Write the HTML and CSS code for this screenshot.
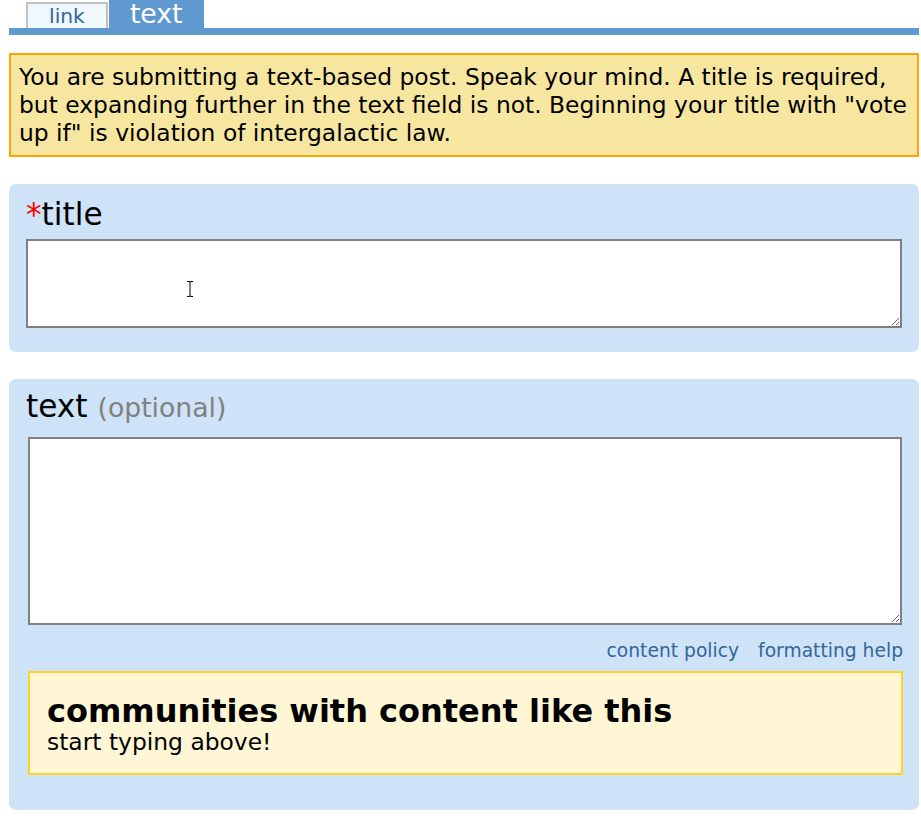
FILE: index.html
```html
<!DOCTYPE html>
<html>
<head>
<meta charset="utf-8">
<title>submit</title>
<link rel="stylesheet" href="styles.css">
</head>
<body>
<div class="page">
  <ul class="tabmenu">
    <li class="tab tab-link">link</li>
    <li class="tab tab-selected">text</li>
  </ul>

  <div class="infobar">You are submitting a text-based post. Speak your mind. A title is required, but expanding further in the text field is not. Beginning your title with "vote up if" is violation of intergalactic law.</div>

  <div class="roundfield field-title">
    <div class="field-label"><span class="required">*</span>title</div>
    <textarea class="title-input"></textarea>
    <svg class="ibeam" width="8" height="18" viewBox="0 0 8 18">
      <path d="M1 1.5h2.5v0.5h1v-0.5h2.5M4 2v14M1 16.5h2.5v-0.5h1v0.5h2.5" fill="none" stroke="#fff" stroke-width="2.6"/>
      <path d="M1 1.5h2.5v0.5h1v-0.5h2.5M4 2v14M1 16.5h2.5v-0.5h1v0.5h2.5" fill="none" stroke="#000" stroke-width="1"/>
    </svg>
  </div>

  <div class="roundfield field-text">
    <div class="field-label text-label">text <span class="optional">(optional)</span></div>
    <textarea class="text-input"></textarea>
    <div class="help-links">
      <span class="help-link">content policy</span>
      <span class="help-link">formatting help</span>
    </div>
    <div class="suggest-box">
      <div class="suggest-title">communities with content like this</div>
      <div class="suggest-sub">start typing above!</div>
    </div>
  </div>
</div>
</body>
</html>
```

FILE: styles.css
```css
html, body {
  margin: 0;
  padding: 0;
  background: #ffffff;
}

body {
  font-family: "DejaVu Sans", Verdana, sans-serif;
  color: #000;
}

.page {
  margin-left: 9px;
  width: 910px;
}

.tabmenu {
  list-style: none;
  margin: 0;
  padding: 0 0 0 17px;
  height: 28px;
  display: flex;
  align-items: flex-end;
  border-bottom: 7px solid #5f99cf;
}

.tab {
  white-space: nowrap;
}

.tab-link {
  margin-right: 1px;
  background: #eff7ff;
  border: 2px solid #c2c2c2;
  border-bottom: 0;
  padding: 1px 21px 0;
  height: 23px;
  line-height: 23px;
  font-size: 20.3px;
  color: #369;
}

.tab-selected {
  background: #5f99cf;
  color: #fff;
  font-size: 26.7px;
  line-height: 28px;
  height: 28px;
  padding: 0 21px;
}

.infobar {
  margin-top: 18px;
  border: 2px solid #ffa500;
  background: #f7e6a0;
  padding: 8px 0 8px 8px;
  font-size: 23.4px;
  line-height: 28px;
}

.roundfield {
  margin-top: 27px;
  background: #cee3f8;
  border-radius: 7px;
}

.field-title {
  position: relative;
  padding: 12px 17px 24px;
}

.field-text {
  padding: 9px 16px 35px 19px;
}

.field-label {
  font-size: 31.2px;
  line-height: 36px;
  margin-bottom: 7px;
}

.text-label {
  margin-left: -2px;
  margin-bottom: 11px;
}

.required {
  color: #ff0000;
}

.optional {
  color: #808080;
  font-size: 26.7px;
}

textarea {
  display: block;
  box-sizing: border-box;
  margin: 0;
  padding: 2px;
  border: 2px solid #808080;
  background: #fff;
  font-family: "DejaVu Sans", sans-serif;
  outline: none;
}

.title-input {
  width: 100%;
  height: 89px;
}

.text-input {
  width: 874px;
  height: 188px;
}

.ibeam {
  position: absolute;
  left: 177px;
  top: 96px;
}

.help-links {
  margin-top: 15px;
  display: flex;
  justify-content: flex-end;
  gap: 19px;
  font-size: 18.7px;
  line-height: 22px;
}

.help-link {
  color: #369;
}

.suggest-box {
  margin-top: 9px;
  border: 2px solid #ffd42a;
  background: #fff6d6;
  padding: 20px 17px 18px;
}

.suggest-title {
  font-weight: bold;
  font-size: 32px;
  line-height: 36px;
}

.suggest-sub {
  font-size: 23.4px;
  line-height: 26px;
}
```
